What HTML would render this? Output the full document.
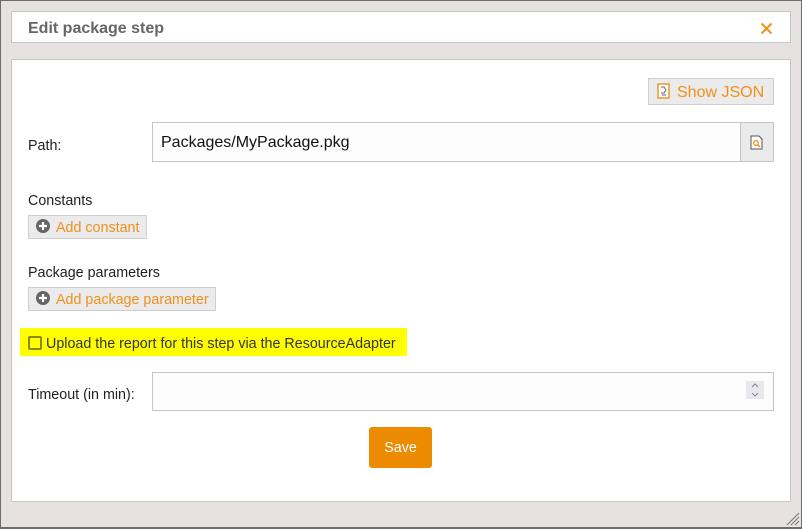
<!DOCTYPE html>
<html><head><style>
*{margin:0;padding:0;box-sizing:border-box}
body{width:802px;height:529px;background:#e6e2e1;font-family:"Liberation Sans",sans-serif;position:relative;overflow:hidden}
.a{position:absolute}
.box{background:#fff;border:1px solid #c6c6c6}
.btn{background:#ebebeb;border:1px solid #cfcfcf;color:#f0901a;font-size:14.3px}
.lbl{font-size:14.3px;color:#222}
</style></head><body>
<div class="a" style="left:0;top:0;width:802px;height:529px;border:1px solid #6d6d6d;border-bottom:2px solid #6d6d6d"></div>
<div class="a box" style="left:11px;top:11px;width:780px;height:32px"></div>
<div class="a" style="left:28px;top:20px;font-size:16px;font-weight:bold;color:#666">Edit package step</div>
<svg class="a" style="left:760px;top:22px" width="13" height="13"><path d="M1.5 1.5L11.5 11.5M11.5 1.5L1.5 11.5" stroke="#f0901a" stroke-width="2"/></svg>
<div class="a box" style="left:11px;top:59px;width:780px;height:443px"></div>
<div class="a btn" style="left:648px;top:78px;width:126px;height:27px;font-size:16px;line-height:27px;padding-left:28px">Show JSON</div>
<svg class="a" style="left:657px;top:83px" width="14" height="17"><rect x="1" y="1" width="11" height="14" fill="#fff" stroke="#e98a14" stroke-width="1.3"/><path d="M4 4h3l2 3-2 3H4M5 12h4" stroke="#666" fill="none"/></svg>
<div class="a lbl" style="left:28px;top:138px">Path:</div>
<div class="a" style="left:152px;top:122px;width:589px;height:40px;border:1px solid #c6c6c6;background:#fdfdfd;font-size:16px;line-height:40px;padding-left:8px;color:#111">Packages/MyPackage.pkg</div>
<div class="a" style="left:740px;top:122px;width:34px;height:40px;border:1px solid #c6c6c6;background:#ebebeb"></div>
<svg class="a" style="left:750px;top:135px" width="14" height="15"><path d="M1 1h8l3 3v10H1z" fill="#fff" stroke="#555"/><circle cx="6" cy="8" r="2.3" fill="none" stroke="#f0901a" stroke-width="1.3"/><path d="M7.5 9.5l2.5 2.5" stroke="#f0901a" stroke-width="1.5"/></svg>
<div class="a lbl" style="left:28px;top:193px">Constants</div>
<div class="a btn" style="left:28px;top:215px;width:119px;height:24px;line-height:24px;padding-left:27px">Add constant</div>
<div class="a lbl" style="left:28px;top:265px">Package parameters</div>
<div class="a btn" style="left:28px;top:287px;width:188px;height:24px;line-height:24px;padding-left:27px">Add package parameter</div>
<svg class="a" style="left:36px;top:219px" width="15" height="15"><circle cx="7" cy="7" r="7" fill="#666"/><path d="M7 3v8M3 7h8" stroke="#fff" stroke-width="2.2"/></svg>
<svg class="a" style="left:36px;top:291px" width="15" height="15"><circle cx="7" cy="7" r="7" fill="#666"/><path d="M7 3v8M3 7h8" stroke="#fff" stroke-width="2.2"/></svg>
<div class="a" style="left:20px;top:328px;width:387px;height:28px;background:#ffff00"></div>
<div class="a" style="left:28px;top:336px;width:14px;height:14px;border:2px solid #8a8a00;border-radius:2px"></div>
<div class="a lbl" style="left:46px;top:336px;color:#333">Upload the report for this step via the ResourceAdapter</div>
<div class="a lbl" style="left:28px;top:387px">Timeout (in min):</div>
<div class="a" style="left:152px;top:372px;width:622px;height:39px;border:1px solid #c6c6c6;background:#fdfdfd"></div>
<div class="a" style="left:746px;top:381px;width:18px;height:18px;background:#e8e8ee"></div>
<svg class="a" style="left:749px;top:382px" width="12" height="16"><path d="M3 5l3-3 3 3M3 11l3 3 3-3" stroke="#888" fill="none"/></svg>
<div class="a" style="left:369px;top:427px;width:63px;height:41px;background:#ed8b00;border-radius:3px;color:#fff;font-size:14.3px;line-height:43px;text-align:center">Save</div>
<svg class="a" style="left:786px;top:512px" width="14" height="14"><path d="M13 1L1 13M13 5L5 13M13 9L9 13" stroke="#777"/></svg>
</body></html>
